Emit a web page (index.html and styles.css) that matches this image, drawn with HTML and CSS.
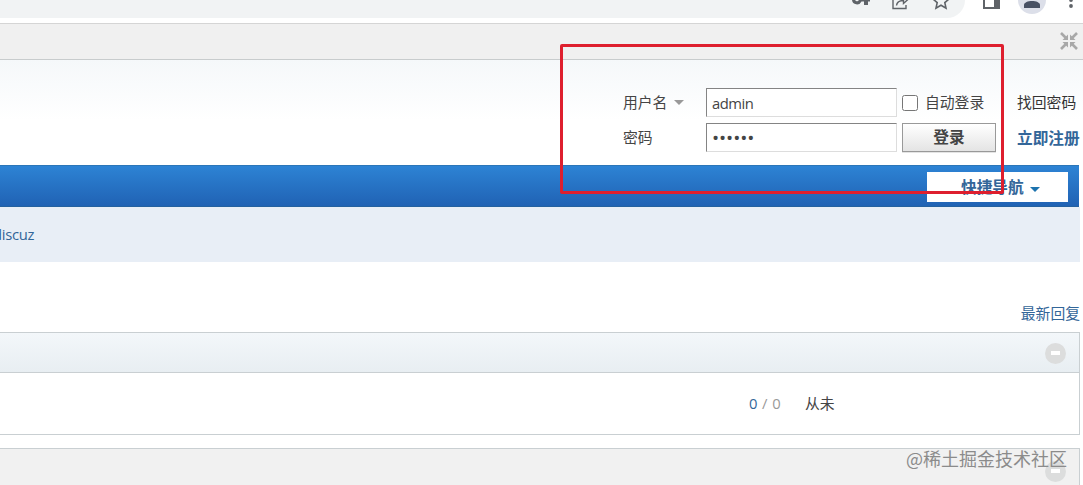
FILE: index.html
```
<!DOCTYPE html>
<html lang="zh-CN">

<head>
    <meta charset="UTF-8">
    <meta name="viewport" content="width=device-width, initial-scale=1.0">
    <title>discuz</title>
    <link rel="stylesheet" href="styles.css">
</head>

<body>
    <div class="browser">
        <div class="address">
            <svg class="key" width="20" height="18" viewBox="0 0 20 18">
                <path d="M0 0a5 5 0 0 0 9.500 1.500H12V5h4V1.500h2V-1H0z" fill="#5f6368" />
                <circle cx="5" cy="-.5" r="1.800" fill="#f1f3f4" />
            </svg>
            <svg class="share" width="18" height="18" viewBox="0 0 18 18" fill="none" stroke="#5f6368" stroke-width="1.400">
                <path d="M1 0v8.500h13V5M4.500 5.500C5 2 8 .5 11.500 .5v3L17-1.500" />
            </svg>
            <svg class="star" width="18" height="18" viewBox="0 0 18 18" fill="none" stroke="#5f6368" stroke-width="1.600">
                <path d="M6.500-2L1-1l4.200 3.600L4 8.200 9 5.200l5 3-1.200-5.600L17-1l-5.500-1" />
            </svg>
        </div>
        <svg class="panel" width="18" height="18" viewBox="0 0 18 18">
            <path d="M1 0v8h15V0" fill="none" stroke="#5f6368" stroke-width="2" />
            <path d="M11 0h6v9h-6z" fill="#5f6368" />
        </svg>
        <svg class="avatar" width="28" height="18" viewBox="0 0 28 18">
            <circle cx="14" cy="0" r="14" fill="#dcdfe9" />
            <path d="M6 8V5c0-2.500 4-4 8-4s8 1.500 8 4v3z" fill="#475063" />
        </svg>
        <svg class="dots" width="4" height="18" viewBox="0 0 4 18" fill="#5f6368">
            <circle cx="2" cy="0" r="1.900" />
            <circle cx="2" cy="6" r="1.900" />
        </svg>
    </div>

    <div class="toptb">
        <svg width="18" height="18" viewBox="0 0 18 18">
            <path d="M1 1l6 6M17 1l-6 6M1 17l6-6M17 17l-6-6" stroke="#a8a8a8" stroke-width="2.600" />
            <path d="M8 2.500V8H2.500zM10 2.500V8h5.500zM8 15.500V10H2.500zM10 15.500V10h5.500z" fill="#a8a8a8" />
        </svg>
    </div>

    <div class="header">
        <form class="login">
            <label class="name">用户名 <i class="arrow"></i></label>
            <input class="txt" type="text" value="admin">
            <label class="auto"><input type="checkbox"><span>自动登录</span></label>
            <a class="find">找回密码</a>
            <label class="name">密码</label>
            <input class="txt pwd" type="password" value="123456">
            <button class="btn" type="button">登录</button>
            <a class="reg">立即注册</a>
        </form>
    </div>

    <div class="nav">
        <div class="quick">快捷导航<i class="arrow"></i></div>
    </div>
    <div class="subnav"><a>discuz</a></div>

    <div class="latest"><a>最新回复</a></div>
    <div class="forum">
        <div class="title"><i class="fold"></i></div>
        <div class="row">
            <span class="count"><em>0</em> / 0</span>
            <span>从未</span>
        </div>
    </div>
    <div class="forum next">
        <div class="title"><i class="fold"></i></div>
    </div>

    <div class="mark"></div>
    <div class="watermark">@稀土掘金技术社区</div>
</body>

</html>
```
FILE: styles.css
```
* {
    margin: 0;
    padding: 0;
    box-sizing: border-box;
}

body {
    position: relative;
    height: 485px;
    overflow: hidden;
    background: #fff;
    color: #444;
    font: 14.800px/20px "Open Sans", "Noto Sans CJK SC", sans-serif;
}

a {
    color: #369;
}

em,
i {
    font-style: normal;
}

svg {
    display: block;
    flex: none;
}

.browser {
    display: flex;
    height: 24px;
    border-bottom: 1px solid #d5d5d5;
}

.address {
    display: flex;
    width: 965px;
    height: 18px;
    padding-left: 852px;
    background: #f1f3f4;
    border-radius: 0 0 18px 0;
}

.share {
    margin-left: 20px;
}

.star {
    margin-left: 22px;
}

.panel {
    margin-left: 18px;
}

.avatar {
    margin-left: 17px;
}

.dots {
    margin-left: 23px;
}

.toptb {
    display: flex;
    justify-content: flex-end;
    align-items: center;
    height: 36px;
    padding: 0 5px 2px 0;
    background: #f0f0f0;
    border-bottom: 1px solid #c8cccd;
}

.header {
    height: 105px;
    padding: 27px 0 0 623px;
    background: linear-gradient(#f5f8fa, #fff 60px);
}

.login {
    display: grid;
    grid-template-columns: 83px 191px 99px 92px;
    grid-template-rows: 30px 30px;
    row-gap: 5px;
    align-items: center;
}

.login .find,
.login .reg {
    margin-left: 21px;
    white-space: nowrap;
}

.login .auto,
.login .btn {
    margin-left: 5px;
}

.name .arrow {
    display: inline-block;
    margin: 0 0 3px 3px;
    border: 5px solid transparent;
    border-top-color: #999;
    border-bottom: 0;
}

.txt {
    width: 191px;
    height: 29px;
    padding: 1px 5px 0;
    border: 1px solid;
    border-color: #848484 #ddd #ddd #848484;
    background: #fff;
    color: #444;
    font: inherit;
    letter-spacing: -.5px;
    outline: none;
}

.pwd {
    font: 19px/20px "Open Sans", sans-serif;
    letter-spacing: -.100px;
}

.auto {
    display: flex;
    align-items: center;
    white-space: nowrap;
}

.auto input {
    width: 16px;
    height: 16px;
    margin: 2px 7px 0 0;
}

.find {
    color: #333;
}

.reg {
    padding-top: 1px;
    font-size: 15.700px;
    font-weight: bold;
}

.btn {
    width: 94px;
    height: 29px;
    border: 1px solid #999;
    background: linear-gradient(#fff, #e4e4e4);
    box-shadow: 0 1px 0 #e4e4e4;
    color: #444;
    font: bold 15.700px/20px "Noto Sans CJK SC", sans-serif;
}

.nav {
    display: flex;
    justify-content: flex-end;
    width: 1079px;
    height: 42px;
    padding: 6px 11px 0 0;
    background: linear-gradient(#2d83d4, #2062b4);
    border-top: 1px solid #2b76b8;
    border-bottom: 1px solid #24619f;
}

.quick {
    display: flex;
    align-items: center;
    width: 141px;
    height: 30px;
    padding-left: 34px;
    background: #fff;
    color: #369;
    font-size: 15.700px;
    font-weight: bold;
}

.quick .arrow {
    margin: 4px 0 0 6px;
    border: 5px solid transparent;
    border-top-color: #1c73ae;
    border-bottom: 0;
}

.subnav {
    width: 1080px;
    height: 55px;
    padding-top: 17px;
    background: #e8eef6;
}

.subnav a {
    margin-left: -7px;
    letter-spacing: -.300px;
}

.latest {
    width: 1080px;
    height: 70px;
    padding-top: 41px;
    text-align: right;
}

.forum {
    width: 1080px;
    height: 103px;
    border: 1px solid #c9cfd2;
    border-left: 0;
}

.forum .title {
    display: flex;
    justify-content: flex-end;
    align-items: center;
    height: 40px;
    padding: 1px 13px 0 0;
    background: linear-gradient(#f3f7fa, #e8eef2);
    border-bottom: 1px solid #c9cfd2;
}

.fold {
    display: flex;
    justify-content: center;
    align-items: center;
    width: 21px;
    height: 21px;
    border-radius: 50%;
    background: #dcdddd;
}

.fold::after {
    content: "";
    width: 9px;
    height: 4px;
    background: #fff;
}

.row {
    display: flex;
    padding: 20px 0 0 749px;
}

.count {
    width: 56px;
    color: #999;
    letter-spacing: .4px;
}

.count em {
    color: #369;
}

.forum.next {
    height: 37px;
    margin-top: 13px;
    border-bottom: 0;
}

.next .title {
    height: 36px;
    padding-top: 8px;
    background: #f1f1f1;
    border-bottom: 0;
}

/* 红色标注框,盖在登录区上面 */
.mark {
    position: absolute;
    left: 560px;
    top: 44px;
    width: 444px;
    height: 150px;
    border: 3px solid #de1f2e;
    border-radius: 2px;
}

.watermark {
    position: absolute;
    right: 16px;
    top: 446px;
    color: #8b8b8b;
    font: 18px/24px "Noto Sans CJK SC", sans-serif;
}
```
